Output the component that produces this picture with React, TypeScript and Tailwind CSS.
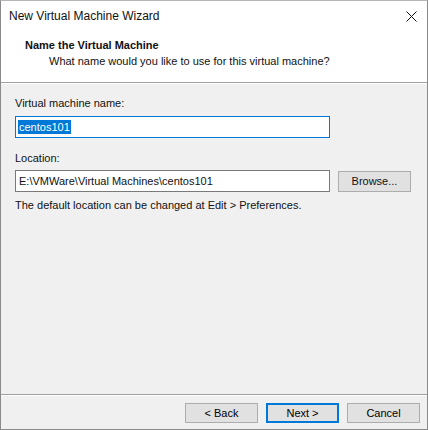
import React from 'react';

const FONT = { fontFamily: '"Liberation Sans", Arial, sans-serif' };

function DlgButton({ label, primary }: { label: string; primary?: boolean }) {
  return (
    <button
      className={
        'h-[20px] w-[73px] bg-[#e1e1e1] text-[11px] leading-none text-black ' +
        (primary ? 'border-2 border-[#0078d7]' : 'border border-[#adadad]')
      }
    >
      {label}
    </button>
  );
}

export default function App() {
  return (
    <div
      className="flex h-[430px] w-[428px] flex-col border border-[#8a8a8a] border-t-[#b5b5b5] bg-[#f0f0f0] text-[11px] leading-[16px] text-[#111]"
      style={FONT}
    >
      {/* title bar */}
      <div className="flex h-[30px] shrink-0 items-center justify-between bg-white pl-[8px] pr-[9px]">
        <span className="text-[12px]">New Virtual Machine Wizard</span>
        <svg width="11" height="11" viewBox="0 0 11 11" className="mr-[1px]">
          <path d="M0.5 0.5 L10.5 10.5 M10.5 0.5 L0.5 10.5" stroke="#111" strokeWidth="1" fill="none" />
        </svg>
      </div>

      {/* header */}
      <div className="h-[52px] shrink-0 border-b border-[#a0a0a0] bg-white pl-[24px] pt-[6px]">
        <p className="font-bold">Name the Virtual Machine</p>
        <p className="pl-[24px]">What name would you like to use for this virtual machine?</p>
      </div>

      {/* body */}
      <div className="flex flex-1 flex-col border-t border-white px-[14px] pt-[11px]">
        <label>Virtual machine name:</label>
        <div className="mt-[5px] flex h-[22px] w-[315px] items-center border border-[#0078d7] bg-white pl-[2px]">
          <span className="bg-[#0078d7] px-[1px] leading-[14px] text-white">centos101</span>
        </div>

        <label className="mt-[12px]">Location:</label>
        <div className="mt-[4px] flex items-center gap-[8px]">
          <div className="flex h-[22px] w-[315px] items-center border border-[#7a7a7a] bg-white pl-[3px]">
            E:\VMWare\Virtual Machines\centos101
          </div>
          <button className="h-[21px] w-[73px] border border-[#adadad] bg-[#e1e1e1] text-[11px] leading-none">
            Browse...
          </button>
        </div>
        <p className="mt-[5px]">The default location can be changed at Edit &gt; Preferences.</p>
      </div>

      {/* footer */}
      <div className="shrink-0 border-t border-[#a0a0a0]">
        <div className="flex justify-end gap-[8px] border-t border-white pb-[6px] pr-[7px] pt-[7px]">
          <DlgButton label="< Back" />
          <DlgButton label="Next >" primary />
          <DlgButton label="Cancel" />
        </div>
      </div>
    </div>
  );
}
